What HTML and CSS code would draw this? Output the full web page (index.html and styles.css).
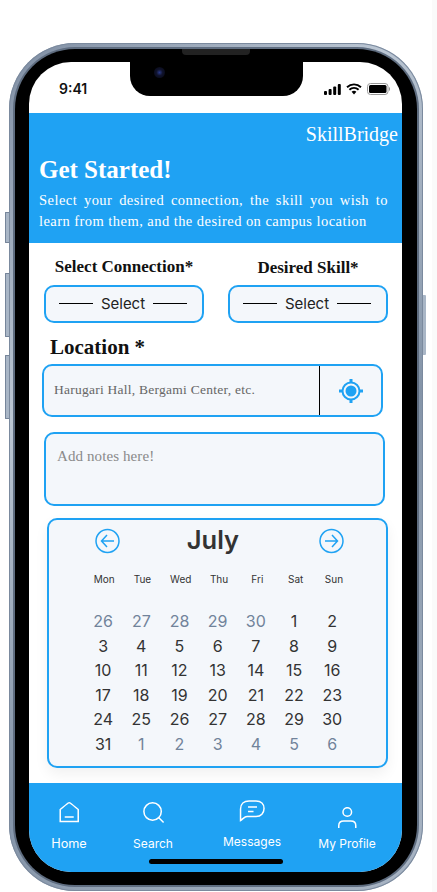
FILE: index.html
```html
<!DOCTYPE html>
<html>
<head lang="en">
    <meta charset="UTF-8">
    <title>SkillBridge</title>
    <link rel="stylesheet" href="styles.css">
</head>
<body>
<div class="phone">
    <div class="side-btn btn-mute"></div>
    <div class="side-btn btn-up"></div>
    <div class="side-btn btn-down"></div>
    <div class="side-btn btn-power"></div>
    <div class="bezel">
        <div class="speaker"></div>
        <div class="notch"><div class="camera"></div></div>
        <div class="screen">
            <div class="status">
                <span class="time">9:41</span>
                <div class="status-icons">
                    <svg width="17" height="11" viewBox="0 0 17 11"><rect x="0" y="7" width="3" height="4" rx="1"/><rect x="4.6" y="5" width="3" height="6" rx="1"/><rect x="9.2" y="2.5" width="3" height="8.5" rx="1"/><rect x="13.8" y="0" width="3" height="11" rx="1"/></svg>
                    <svg width="16" height="12" viewBox="0 0 16 12"><path d="M1 4.2C5 .4 11 .4 15 4.2M3.4 6.7C6 4.3 10 4.3 12.6 6.7" fill="none" stroke="#000" stroke-width="1.9"/><path d="M5.6 8.7C7 7.5 9 7.5 10.4 8.7L8 11.4Z"/></svg>
                    <svg width="23" height="12" viewBox="0 0 23 12"><rect x=".5" y=".5" width="20.5" height="11" rx="3" fill="none" stroke="#999"/><rect x="2" y="2" width="17.5" height="8" rx="1.5"/><path d="M22 4v4c.7-.3 1-1 1-2s-.3-1.700-1-2z" fill="#999"/></svg>
                </div>
            </div>
            <div class="header">
                <div class="brand">SkillBridge</div>
                <h1>Get Started!</h1>
                <p>Select your desired connection, the skill you wish to learn from them, and the desired on campus location</p>
            </div>
            <div class="content">
                <div class="pickers">
                    <div class="picker">
                        <div class="picker-label">Select Connection*</div>
                        <div class="select-box"><i></i><span>Select</span><i></i></div>
                    </div>
                    <div class="picker picker-right">
                        <div class="picker-label">Desired Skill*</div>
                        <div class="select-box"><i></i><span>Select</span><i></i></div>
                    </div>
                </div>
                <h2>Location *</h2>
                <div class="location">
                    <div class="location-text">Harugari Hall, Bergami Center, etc.</div>
                    <div class="location-btn">
                        <svg width="26" height="26" viewBox="0 0 26 26"><circle cx="13" cy="13" r="8.5" fill="none" stroke="#1fa2f3" stroke-width="2"/><circle cx="13" cy="13" r="5.5" fill="#1fa2f3"/><path d="M13 1v4M13 21v4M1 13h4M21 13h4" stroke="#1fa2f3" stroke-width="3"/></svg>
                    </div>
                </div>
                <div class="notes">Add notes here!</div>
                <div class="calendar">
                    <div class="cal-head">
                        <svg width="25" height="26" viewBox="0 0 25 26"><circle cx="12.5" cy="13" r="11.5"/><path d="M19 13H6.500M12 7l-5.500 6 5.500 6"/></svg>
                        <span class="month">July</span>
                        <svg width="25" height="26" viewBox="0 0 25 26"><circle cx="12.5" cy="13" r="11.5"/><path d="M6 13h12.500M13 7l5.500 6-5.500 6"/></svg>
                    </div>
                    <div class="weekdays">
                        <span>Mon</span><span>Tue</span><span>Wed</span><span>Thu</span><span>Fri</span><span>Sat</span><span>Sun</span>
                    </div>
                    <div class="days">
                        <span class="off">26</span><span class="off">27</span><span class="off">28</span><span class="off">29</span><span class="off">30</span><span>1</span><span>2</span>
                        <span>3</span><span>4</span><span>5</span><span>6</span><span>7</span><span>8</span><span>9</span>
                        <span>10</span><span>11</span><span>12</span><span>13</span><span>14</span><span>15</span><span>16</span>
                        <span>17</span><span>18</span><span>19</span><span>20</span><span>21</span><span>22</span><span>23</span>
                        <span>24</span><span>25</span><span>26</span><span>27</span><span>28</span><span>29</span><span>30</span>
                        <span>31</span><span class="off">1</span><span class="off">2</span><span class="off">3</span><span class="off">4</span><span class="off">5</span><span class="off">6</span>
                    </div>
                </div>
            </div>
            <div class="nav">
                <div class="nav-item nav-home">
                    <svg width="22" height="22" viewBox="0 0 22 22"><path d="M2 20.5V8.500C5 6 8 3.500 10 2c.6-.4 1.400-.4 2 0 2 1.500 5 4 8 6.500v12zM6.500 16h9"/></svg>
                    <span>Home</span>
                </div>
                <div class="nav-item nav-search">
                    <svg width="24" height="24" viewBox="0 0 24 24"><circle cx="10.5" cy="10.5" r="8.7"/><path d="M16.500 16.500l5 5"/></svg>
                    <span>Search</span>
                </div>
                <div class="nav-item nav-msg">
                    <svg width="26" height="24" viewBox="0 0 26 24"><path d="M1.500 21.500V10C1.500 5 5 2 10 2h7c5 0 8 3 8 7.500s-3 8-8 8H8c-2.500 0-4 2.500-6.500 4zM9 8h9M9 12.500h5.500"/></svg>
                    <span>Messages</span>
                </div>
                <div class="nav-item nav-profile">
                    <svg width="20" height="22" viewBox="0 0 20 22"><circle cx="10" cy="5" r="4.3"/><path d="M1.500 21v-2.500c0-3 2-4.500 5-4.500h7c3 0 5 1.500 5 4.500V21"/></svg>
                    <span>My Profile</span>
                </div>
                <div class="home-bar"></div>
            </div>
        </div>
    </div>
</div>
</body>
</html>
```

FILE: styles.css
```css
*{
    margin:0;
    padding:0;
    box-sizing:border-box;
}
html,body{
    height:892px;
    overflow:hidden;
}
html{
    background:linear-gradient(90deg,#fff 432px,#fafafa 432px);
}
body{
    padding:43px 0 0 9px;
    font-family:"Inter",sans-serif;
}
.phone{
    position:relative;
    width:414px;
    height:848px;
    border-radius:66px;
    padding:6px;
    background:linear-gradient(135deg,#7f8ea3,#bcc7d4 30%,#8494a8 60%,#aab6c5);
    box-shadow:inset 0 0 0 1px #7b8a9e;
}
.side-btn{
    position:absolute;
    width:4px;
    background:#a9b6c6;
    border:1px solid #76859a;
    border-right:none;
    border-radius:1px 0 0 1px;
}
.btn-mute{left:-4px;top:169px;height:31px;}
.btn-up{left:-4px;top:230px;height:64px;}
.btn-down{left:-4px;top:312px;height:64px;}
.btn-power{
    right:-3px;
    top:252px;
    height:60px;
    width:3px;
    border:none;
    border-radius:0 1px 1px 0;
}
.bezel{
    position:relative;
    height:100%;
    padding:13px 15px 14px 14px;
    background:#000;
    border-radius:60px;
    box-shadow:0 0 0 2px #5f6d80;
}
.speaker{
    position:absolute;
    left:167px;
    top:0;
    width:68px;
    height:6px;
    background:#222;
    border-radius:0 0 4px 4px;
    z-index:3;
}
.notch{
    position:absolute;
    left:115px;
    top:13px;
    width:173px;
    height:34px;
    background:#000;
    border-radius:0 0 20px 20px;
    z-index:2;
}
.camera{
    position:absolute;
    left:24px;
    top:5px;
    width:11px;
    height:11px;
    border-radius:50%;
    background:radial-gradient(circle,#2a3a8a 0,#10132c 40%,#05060f 100%);
}
.screen{
    height:810px;
    background:#fff;
    border-radius:42px;
    overflow:hidden;
    display:flex;
    flex-direction:column;
}
.status{
    height:51px;
    flex:none;
    display:flex;
    justify-content:space-between;
    align-items:flex-start;
    padding:18px 12px 0 30px;
}
.time{
    font-size:14px;
    font-weight:600;
    color:#111;
    line-height:17px;
}
.status-icons{
    display:flex;
    gap:5px;
    align-items:center;
    padding-top:3px;
}
.header{
    height:130px;
    flex:none;
    background:#1fa2f3;
    color:#fff;
    padding:9px 4px 0 10px;
    font-family:"Liberation Serif",serif;
}
.brand{
    text-align:right;
    font-size:20px;
    line-height:24px;
}
h1{
    font-size:25px;
    line-height:30px;
    margin-top:9px;
}
.header p{
    font-size:14.5px;
    line-height:21px;
    letter-spacing:.45px;
    margin-top:5px;
    padding-right:10px;
    text-align:justify;
}
.content{
    flex:1;
    padding:14px 0 0 13px;
    background:#fff;
}
.pickers{
    display:flex;
    gap:24px;
    padding-left:2px;
}
.picker{
    width:160px;
}
.picker-label{
    font-family:"Liberation Serif",serif;
    font-weight:bold;
    font-size:17px;
    line-height:20px;
    text-align:center;
    color:#111;
}
.picker-right .picker-label{
    padding-top:1px;
    margin-bottom:-1px;
}
.select-box{
    margin-top:8px;
    height:38px;
    border:2px solid #1fa2f3;
    border-radius:10px;
    background:#f4f7fb;
    display:flex;
    align-items:center;
    justify-content:center;
    gap:8px;
    padding-right:2px;
    font-size:15px;
    line-height:18px;
    color:#222;
}
.select-box span{
    margin-top:-1px;
}
.select-box i{
    width:34px;
    border-top:1px solid #000;
    margin-top:-2px;
}
h2{
    font-family:"Liberation Serif",serif;
    font-size:21px;
    line-height:26px;
    margin:11px 0 0 8px;
    color:#111;
}
.location{
    width:341px;
    height:53px;
    margin-top:4px;
    border:2px solid #1fa2f3;
    border-radius:10px;
    background:#f4f7fb;
    display:flex;
}
.location-text{
    flex:1;
    border-right:1px solid #000;
    padding:15px 0 0 10px;
    font-family:"Liberation Serif",serif;
    font-size:13.5px;
    letter-spacing:.25px;
    line-height:18px;
    color:#666;
}
.location-btn{
    width:61px;
    display:flex;
    align-items:center;
    justify-content:center;
}
.notes{
    width:341px;
    height:74px;
    margin:15px 0 0 2px;
    border:2px solid #1fa2f3;
    border-radius:10px;
    background:#f4f7fb;
    padding:12px 0 0 11px;
    font-family:"Liberation Serif",serif;
    font-size:15px;
    letter-spacing:.1px;
    line-height:20px;
    color:#8a8a8a;
}
.calendar{
    width:341px;
    height:250px;
    margin:12px 0 0 5px;
    border:2px solid #1fa2f3;
    border-radius:10px;
    background:#f4f7fb;
    box-shadow:0 6px 14px rgba(0,0,0,.06);
}
.cal-head{
    display:flex;
    justify-content:space-between;
    align-items:center;
    padding:6px 42px 0 46px;
    height:36px;
}
.cal-head svg{
    fill:none;
    stroke:#1fa2f3;
    stroke-width:1.5;
}
.month{
    font-size:25.5px;
    font-weight:600;
    color:#333;
    line-height:30px;
    margin:-2px 13px 0 0;
}
.weekdays,.days{
    display:grid;
    text-align:center;
}
.weekdays{
    grid-template-columns:repeat(7,38.3px);
    padding-left:36px;
    margin-top:17px;
    font-size:10px;
    line-height:12px;
    color:#333;
}
.days{
    grid-template-columns:repeat(7,38.2px);
    padding-left:35px;
    margin-top:24px;
    font-size:16px;
    line-height:24.6px;
    color:#333;
}
.off{
    color:#71839a;
}
.nav{
    position:relative;
    height:89px;
    flex:none;
    background:#1fa2f3;
    color:#fff;
    font-size:12px;
}
.nav-item{
    position:absolute;
    display:flex;
    flex-direction:column;
    align-items:center;
    transform:translateX(-50%);
    white-space:nowrap;
}
.nav-item svg{
    fill:none;
    stroke:#fff;
    stroke-width:1.5;
}
.nav-home{left:40px;top:18px;gap:13px;font-size:12.7px;}
.nav-search{left:124px;top:18px;gap:11px;}
.nav-search svg{margin-left:3px;}
.nav-msg{left:223px;top:16px;gap:11px;}
.nav-profile{left:318px;top:24px;gap:7px;}
.home-bar{
    position:absolute;
    left:120px;
    top:76px;
    width:134px;
    height:5px;
    border-radius:3px;
    background:#000;
}
```
